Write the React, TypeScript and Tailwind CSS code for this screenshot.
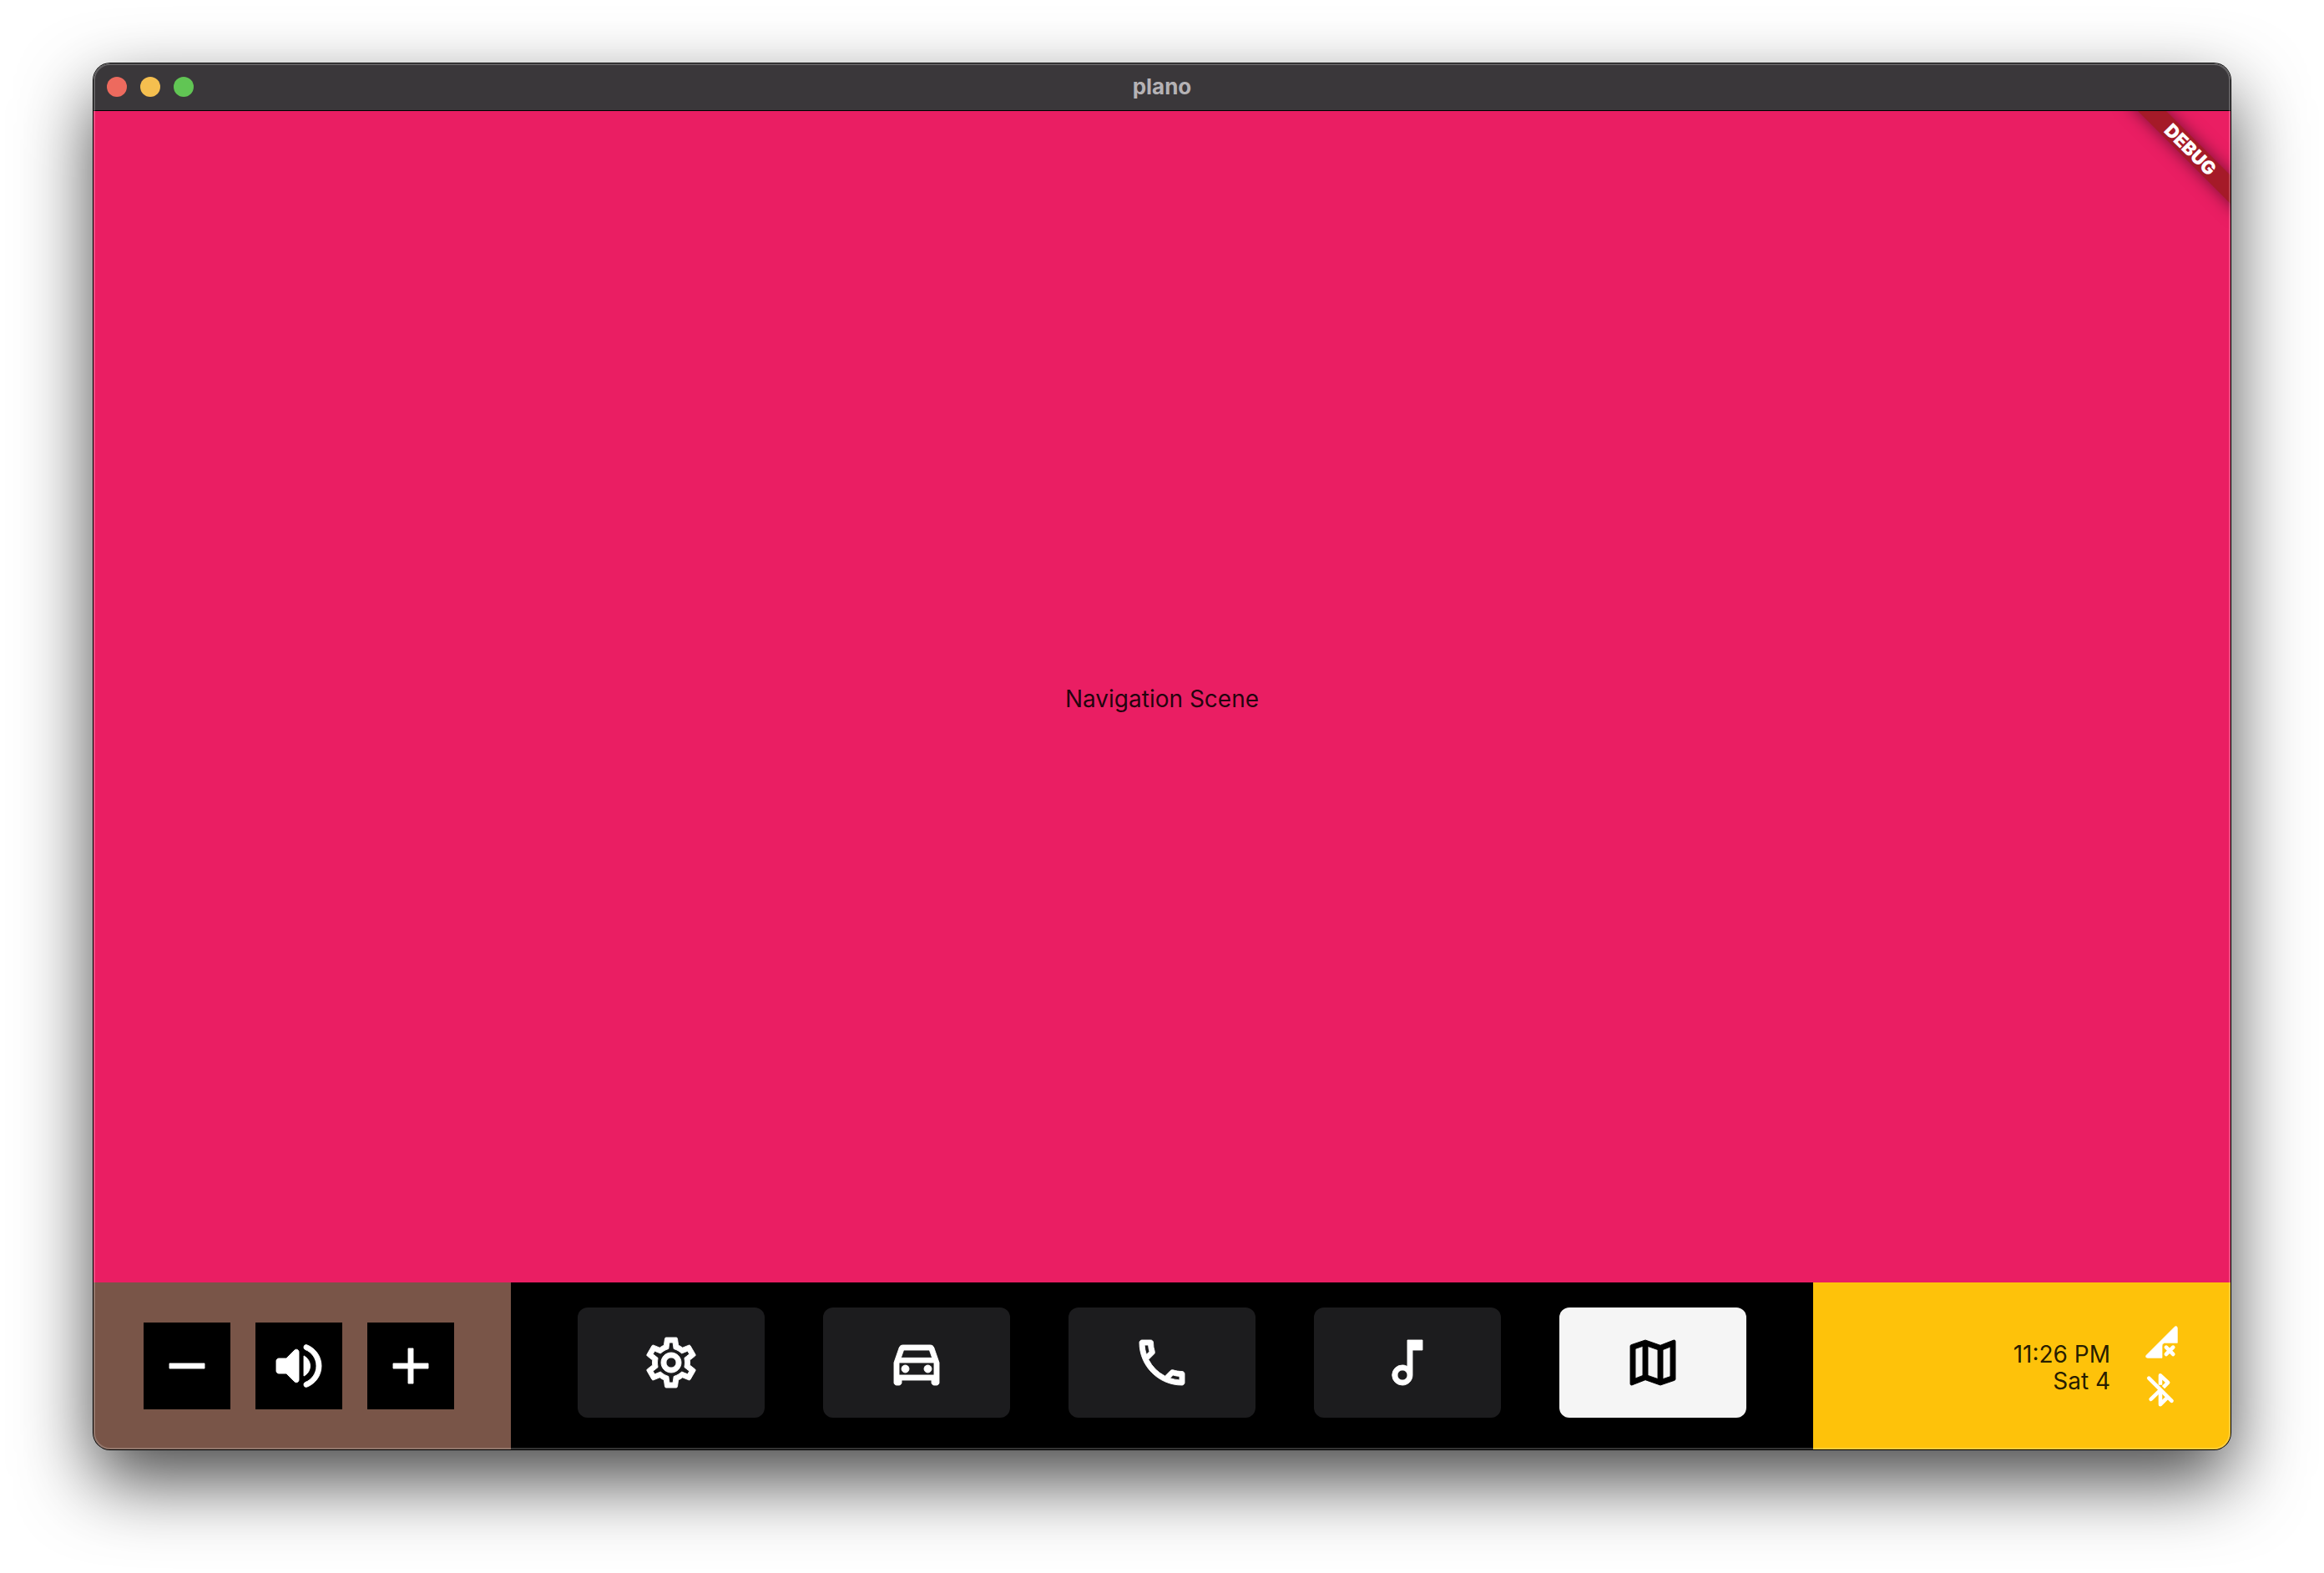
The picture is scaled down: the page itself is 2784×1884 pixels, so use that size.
import { type ReactNode } from "react";
import {
  MdAdd,
  MdOutlineCall,
  MdOutlineDirectionsCar,
  MdOutlineMap,
  MdOutlineMusicNote,
  MdOutlineSettings,
  MdRemove,
} from "react-icons/md";

const SCENES = [
  { label: "Settings", Icon: MdOutlineSettings },
  { label: "Vehicle", Icon: MdOutlineDirectionsCar },
  { label: "Phone", Icon: MdOutlineCall },
  { label: "Music", Icon: MdOutlineMusicNote },
  { label: "Navigation", Icon: MdOutlineMap },
];

const GLYPH = "size-[72px] stroke-current [stroke-width:0.3] [&>path[fill=none]]:hidden";

function VolumeIcon() {
  return (
    <svg viewBox="0 0 24 24" fill="currentColor" className={GLYPH} aria-hidden="true">
      <path d="M3 10v4c0 .55.45 1 1 1h3l3.29 3.29c.63.63 1.71.18 1.71-.71V6.41c0-.89-1.08-1.34-1.71-.71L7 9H4c-.55 0-1 .45-1 1zm13.5 2c0-1.77-1.02-3.29-2.5-4.03v8.05c1.48-.73 2.5-2.25 2.5-4.02zM14 4.45v.2c0 .38.25.71.6.85C17.18 6.53 19 9.06 19 12s-1.82 5.47-4.4 6.5c-.36.14-.6.47-.6.85v.2c0 .63.63 1.07 1.21.85C18.6 19.11 21 15.84 21 12s-2.4-7.11-5.79-8.4c-.58-.23-1.21.22-1.21.85z" />
    </svg>
  );
}

function NoSignalIcon() {
  return (
    <svg viewBox="0 0 24 24" fill="currentColor" stroke="currentColor" className="size-11 overflow-visible" role="img" aria-label="No signal">
      <path strokeWidth="0.4" d="M22 12.2h-8c-1.1 0-2 .9-2 2V22H2.42c-.89 0-1.34-1.08-.71-1.71L20.29 1.71c.63-.63 1.71-.18 1.71.71z" />
      <path d="M14.7 15.1l4.5 4.5M19.2 15.1l-4.5 4.5" fill="none" strokeWidth="2.6" strokeLinecap="round" />
    </svg>
  );
}

function BluetoothOffIcon() {
  return (
    <svg viewBox="0 0 24 24" fill="none" stroke="currentColor" strokeWidth="2.5" strokeLinecap="round" strokeLinejoin="round" className="size-11 overflow-visible" role="img" aria-label="Bluetooth off">
      <path d="M3.4 4.7L18.3 19.6" />
      <path d="M4.7 18.5L10.9 12.5" />
      <path d="M10.9 12.8V21.9L15.4 17.4" />
      <path strokeLinecap="butt" d="M10.9 9.2V2.9L15.9 7.6L12.8 10.7" />
    </svg>
  );
}

function VolumeButton({ label, children }: { label: string; children: ReactNode }) {
  return (
    <button type="button" aria-label={label} className="flex size-[104px] items-center justify-center bg-black text-white">
      {children}
    </button>
  );
}

export default function App() {
  return (
    <div className="flex h-screen flex-col bg-white px-28 pt-19 pb-37 font-[Inter,sans-serif]">
      <div className="relative flex grow flex-col overflow-clip rounded-[20px] shadow-[0_0_0_1px_#000,0_37px_88px_rgba(0,0,0,0.72)]">
        <header className="grid h-14 shrink-0 grid-cols-[1fr_auto_1fr] items-center bg-[#3a373a] px-4">
          <div className="flex gap-4">
            <button type="button" aria-label="Close" className="size-6 rounded-full bg-[#ed6a5e]" />
            <button type="button" aria-label="Minimize" className="size-6 rounded-full bg-[#f5bf4f]" />
            <button type="button" aria-label="Zoom" className="size-6 rounded-full bg-[#61c554]" />
          </div>
          <h1 className="text-[26px] leading-8 font-bold text-[#b5b2b5]">plano</h1>
        </header>

        <main className="relative flex grow items-center justify-center overflow-hidden border-t border-black bg-[#ea1e63] pt-1">
          <p className="text-[28px] leading-8 text-black/87">Navigation Scene</p>
          <div className="absolute top-[34px] -right-12 flex h-6 w-48 rotate-45 items-center justify-center bg-[#a51a28] shadow-[0_0_20px_rgba(0,0,0,0.5)]">
            <span className="text-[22px] leading-6 font-black text-white">DEBUG</span>
          </div>
        </main>

        <footer className="flex h-50 shrink-0 bg-black">
          <div className="flex w-125 items-center gap-[30px] bg-[#795548] pl-15">
            <VolumeButton label="Volume down">
              <MdRemove className={GLYPH} />
            </VolumeButton>
            <VolumeButton label="Mute">
              <VolumeIcon />
            </VolumeButton>
            <VolumeButton label="Volume up">
              <MdAdd className={GLYPH} />
            </VolumeButton>
          </div>

          <nav className="flex grow gap-[70px] px-20 pt-[30px]">
            {SCENES.map(({ label, Icon }) => (
              <button
                key={label}
                type="button"
                aria-label={label}
                className={
                  label === "Navigation"
                    ? "flex h-33 flex-1 items-center justify-center rounded-xl bg-[#f5f5f5] text-black"
                    : "flex h-33 flex-1 items-center justify-center rounded-xl bg-[#1c1c1e] text-white"
                }
              >
                <Icon className={GLYPH} />
              </button>
            ))}
          </nav>

          <div className="flex w-125 items-center justify-end gap-10 bg-[#fec20a] pr-15">
            <div className="pt-1 text-right text-[28px] leading-8 text-black/87">
              <p>11:26 PM</p>
              <p>Sat 4</p>
            </div>
            <div className="flex flex-col gap-3 text-white">
              <NoSignalIcon />
              <BluetoothOffIcon />
            </div>
          </div>
        </footer>
        <div className="pointer-events-none absolute inset-0 rounded-[20px] border-2 border-white/20" />
      </div>
    </div>
  );
}
